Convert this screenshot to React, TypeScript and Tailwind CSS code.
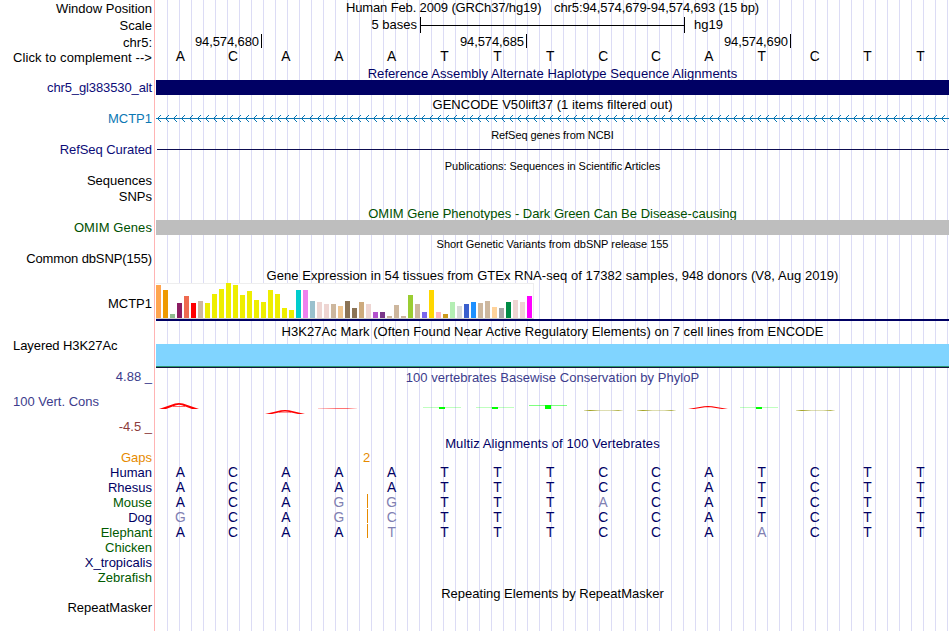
import type { ReactNode } from "react";
import clsx from "clsx";

type Bar = { height: number; color: string };

type Species = {
  name: string;
  color: string;
  bases?: string;
  mismatches?: number[];
  insertion?: boolean;
};

const REFERENCE = "ACAAATTTCCATCTT";

const species: Species[] = [
  { name: "Human", color: "text-[#000064]", bases: REFERENCE },
  { name: "Rhesus", color: "text-[#000064]", bases: REFERENCE },
  { name: "Mouse", color: "text-[#005a00]", bases: "ACAGGTTTACATCTT", mismatches: [3, 4, 8], insertion: true },
  { name: "Dog", color: "text-[#000064]", bases: "GCAGCTTTCCATCTT", mismatches: [0, 3, 4], insertion: true },
  { name: "Elephant", color: "text-[#005a00]", bases: "ACAATTTTCCAACTT", mismatches: [4, 11], insertion: true },
  { name: "Chicken", color: "text-[#005a00]" },
  { name: "X_tropicalis", color: "text-[#000064]" },
  { name: "Zebrafish", color: "text-[#005a00]" },
];

const tissues: Bar[] = [
  { height: 33, color: "#ffa54f" },
  { height: 28, color: "#ee9a00" },
  { height: 4, color: "#8fbc8f" },
  { height: 15, color: "#8b1c62" },
  { height: 22, color: "#ee6a50" },
  { height: 15, color: "#ff0000" },
  { height: 17, color: "#cdb79e" },
  { height: 15, color: "#eeee00" },
  { height: 24, color: "#eeee00" },
  { height: 29, color: "#eeee00" },
  { height: 35, color: "#eeee00" },
  { height: 33, color: "#eeee00" },
  { height: 23, color: "#eeee00" },
  { height: 27, color: "#eeee00" },
  { height: 18, color: "#eeee00" },
  { height: 16, color: "#eeee00" },
  { height: 28, color: "#eeee00" },
  { height: 24, color: "#eeee00" },
  { height: 10, color: "#eeee00" },
  { height: 8, color: "#eeee00" },
  { height: 28, color: "#00cdcd" },
  { height: 28, color: "#ee82ee" },
  { height: 17, color: "#9ac0cd" },
  { height: 16, color: "#eed5d2" },
  { height: 14, color: "#eed5d2" },
  { height: 14, color: "#cdb79e" },
  { height: 12, color: "#eec591" },
  { height: 17, color: "#8b7355" },
  { height: 10, color: "#8b7355" },
  { height: 16, color: "#cdaa7d" },
  { height: 14, color: "#eed5d2" },
  { height: 6, color: "#b452cd" },
  { height: 6, color: "#7a378b" },
  { height: 2, color: "#cdb79e" },
  { height: 13, color: "#cdb79e" },
  { height: 2, color: "#cdb79e" },
  { height: 23, color: "#9acd32" },
  { height: 14, color: "#cdb79e" },
  { height: 6, color: "#7a67ee" },
  { height: 28, color: "#ffd700" },
  { height: 6, color: "#ffb6c1" },
  { height: 4, color: "#cd9b1d" },
  { height: 16, color: "#b4eeb4" },
  { height: 12, color: "#d9d9d9" },
  { height: 14, color: "#3a5fcd" },
  { height: 16, color: "#1e90ff" },
  { height: 15, color: "#cdb79e" },
  { height: 17, color: "#cdb79e" },
  { height: 11, color: "#ffd39b" },
  { height: 10, color: "#a6a6a6" },
  { height: 16, color: "#008b45" },
  { height: 18, color: "#eed5d2" },
  { height: 16, color: "#eed5d2" },
  { height: 22, color: "#ff00ff" },
];

type RowProps = {
  label?: string;
  labelClass?: string;
  className?: string;
  children?: ReactNode;
};

const Row = ({ label, labelClass, className, children }: RowProps) => (
  <div className={clsx("flex shrink-0", className ?? "h-[15px]")}>
    <div className={clsx("w-[156px] shrink-0 whitespace-pre pr-1 text-right", labelClass)}>{label}</div>
    <div className="w-[793px] shrink-0">{children}</div>
  </div>
);

const Title = ({ text, className, height }: { text: string; className?: string; height?: string }) => (
  <Row className={height ?? "h-4 pt-0.5"}>
    <div className={clsx("whitespace-nowrap text-center", className)}>{text}</div>
  </Row>
);

const Bases = ({ bases, mismatches = [], className }: { bases: string; mismatches?: number[]; className?: string }) => (
  <div className={clsx("-ml-[2.2px] grid w-[793px] grid-cols-15 text-center text-[13.8px]", className)}>
    {bases.split("").map((base, i) => (
      <span key={i} className={clsx(mismatches.includes(i) && "text-[#8080b2]")}>
        {base}
      </span>
    ))}
  </div>
);

const ScaleBar = () => (
  <div className="flex">
    <span className="w-[261px] text-right">5 bases</span>
    <div className="ml-[3px] flex h-4 w-[265px] items-center border-x border-black">
      <div className="h-px w-full bg-black" />
    </div>
    <span className="ml-[9px]">hg19</span>
  </div>
);

const Coordinates = () => (
  <div className="flex tracking-[-0.1px]">
    <span className="h-[14px] w-[106px] border-r border-black pr-0.5 text-right">94,574,680</span>
    <span className="h-[14px] w-[265px] border-r border-black pr-0.5 text-right">94,574,685</span>
    <span className="h-[14px] w-[264px] border-r border-black pr-0.5 text-right">94,574,690</span>
  </div>
);

const IntronArrows = () => (
  <svg className="block" width="793" height="15" shapeRendering="crispEdges">
    <rect x="0" y="7" width="793" height="1" fill="#0c78b4" />
    {Array.from({ length: 99 }, (_, i) => {
      const x = 1 + i * 8;
      return (
        <path
          key={i}
          d={`M${x + 1} 6h1v1h-1zM${x + 2} 5h1v1h-1zM${x + 3} 4h1v1h-1zM${x + 1} 8h1v1h-1zM${x + 2} 9h1v1h-1zM${x + 3} 10h1v1h-1z`}
          fill="#0c78b4"
        />
      );
    })}
  </svg>
);

const ExpressionGraph = () => (
  <div className="flex h-10 flex-col pt-px">
    <div className="flex h-9 w-[378px] items-end gap-0.5 border-b border-r border-t border-[#eeeeee] border-b-[#cccccc] bg-white">
      {tissues.map((tissue, i) => (
        <div key={i} className="w-[5px] shrink-0" style={{ height: tissue.height, backgroundColor: tissue.color }} />
      ))}
    </div>
    <div className="h-0.5 bg-[#000064]" />
  </div>
);

const greenMark = (x: number, y: number, height: number, opacity: number) => (
  <g key={x}>
    <rect x={x} y={y} width="38" height="1" fill="#00ff00" opacity={opacity} />
    <rect x={x + 16} y={y} width="6" height={height} fill="#00ff00" />
  </g>
);

const Conservation = () => (
  <svg className="block" width="793" height="18">
    <defs>
      <linearGradient id="olive">
        <stop offset="0" stopColor="#a0a020" stopOpacity="0.3" />
        <stop offset="0.15" stopColor="#a0a020" />
        <stop offset="0.4" stopColor="#a0a020" stopOpacity="0.35" />
        <stop offset="0.7" stopColor="#a0a020" stopOpacity="0.35" />
        <stop offset="0.88" stopColor="#a0a020" stopOpacity="0.8" />
        <stop offset="1" stopColor="#a0a020" stopOpacity="0.1" />
      </linearGradient>
      <linearGradient id="flat">
        <stop offset="0" stopColor="#ff0000" stopOpacity="0.2" />
        <stop offset="0.5" stopColor="#ff0000" stopOpacity="0.55" />
        <stop offset="0.75" stopColor="#ff0000" stopOpacity="0.55" />
        <stop offset="1" stopColor="#ff0000" stopOpacity="0.1" />
      </linearGradient>
    </defs>
    <path d="M3 9L19 3.4Q23 2.4 27 3.4L43 9H36L26 5.2Q23 4.2 20 5.2L10 9z" fill="#ff0000" />
    <rect x="17" y="6" width="12" height="1" fill="#ff0000" opacity="0.6" />
    <path d="M109 14L125 10.3Q129 9.5 133 10.3L149 14H142L132 11.7Q129 11.2 126 11.7L116 14z" fill="#ff0000" />
    <rect x="123" y="12" width="12" height="1" fill="#ff0000" opacity="0.4" />
    <rect x="162" y="8" width="39" height="1" fill="url(#flat)" />
    <path d="M532 9L548 6.3Q552 5.7 556 6.3L572 9H566L555 7.3Q552 7 549 7.3L538 9z" fill="#ff0000" />
    {greenMark(267, 7, 2, 0.25)}
    {greenMark(320, 7, 2, 0.25)}
    {greenMark(373, 5, 4, 0.5)}
    {greenMark(584, 7, 2, 0.25)}
    {[428, 481, 640].map((x) => (
      <rect key={x} x={x} y="10" width="39" height="1" fill="url(#olive)" />
    ))}
  </svg>
);

const App = () => {
  return (
    <div className="h-[631px] w-[950px] overflow-hidden bg-white font-['Liberation_Sans',Arial,sans-serif] text-[13px] leading-[15px] text-black">
      <div className="relative flex h-full w-[949px] flex-col">
        {/* guide lines behind every track */}
        <div className="absolute inset-y-0 left-[154px] right-0 flex">
          <div className="w-px bg-[#ffb4b4]" />
          <div className="ml-px flex-1 bg-[repeating-linear-gradient(90deg,transparent_0px,transparent_11px,#dcdcf5_11px,#dcdcf5_12px)]" />
        </div>

        <div className="relative flex flex-col">
          <Row label="Window Position" className="h-[17px] pt-px">
            <div className="-mt-px flex pl-[190px]">
              <span className="w-[208px] whitespace-nowrap tracking-[-0.14px]">Human Feb. 2009 (GRCh37/hg19)</span>
              <span className="whitespace-nowrap tracking-[-0.09px]">chr5:94,574,679-94,574,693 (15 bp)</span>
            </div>
          </Row>
          <Row label="Scale" className="h-[17px]" labelClass="pt-px">
            <ScaleBar />
          </Row>
          <Row label="chr5:" className="h-4" labelClass="pt-px">
            <Coordinates />
          </Row>
          <Row label="Click to complement -->" labelClass="tracking-[0.09px]">
            <Bases bases={REFERENCE} className="-mt-px" />
          </Row>

          <Title
            text="Reference Assembly Alternate Haplotype Sequence Alignments"
            className="tracking-[0.07px] text-[#000064]"
            height="h-[15px] pt-px"
          />
          <Row label="chr5_gl383530_alt" labelClass="tracking-[-0.12px] text-[#0c0c78]">
            <div className="h-[15px] bg-[#000064]" />
          </Row>

          <Title text="GENCODE V50lift37 (1 items filtered out)" className="tracking-[0.04px]" />
          <Row label="MCTP1" labelClass="text-[#0c78b4]">
            <IntronArrows />
          </Row>

          <Title text="RefSeq genes from NCBI" className="text-[11px] tracking-[-0.07px]" />
          <Row label="RefSeq Curated" labelClass="tracking-[-0.07px] text-[#0c0c78]">
            <div className="ml-px pt-[7px]">
              <div className="h-px bg-[#0c0c50]" />
            </div>
          </Row>

          <Title text="Publications: Sequences in Scientific Articles" className="text-[11px] tracking-[-0.05px]" />
          <Row label="Sequences" className="h-4" />
          <Row label="SNPs" />

          <Title text="OMIM Gene Phenotypes - Dark Green Can Be Disease-causing" className="text-[#005000]" />
          <Row label="OMIM Genes" labelClass="tracking-[0.08px] text-[#005000]">
            <div className="h-[15px] bg-[#bebebe]" />
          </Row>

          <Title text="Short Genetic Variants from dbSNP release 155" className="text-[11px] tracking-[-0.03px]" />
          <Row label="Common dbSNP(155)" labelClass="tracking-[-0.12px]" />

          <Title
            text="Gene Expression in 54 tissues from GTEx RNA-seq of 17382 samples, 948 donors (V8, Aug 2019)"
            className="tracking-[0.05px]"
          />
          <Row label="MCTP1" className="h-10" labelClass="pt-[14px]">
            <ExpressionGraph />
          </Row>

          <Title
            text="H3K27Ac Mark (Often Found Near Active Regulatory Elements) on 7 cell lines from ENCODE"
            className="tracking-[0.05px]"
          />
          <Row label="Layered H3K27Ac" className="h-[30px]" labelClass="pl-[13px] text-left! tracking-[-0.07px]">
            <div className="pt-1.5">
              <div className="h-6 border-b border-[#14143c] bg-[#80d4ff]">
                <div className="h-[22px]" />
                <div className="h-px bg-[#28966e]" />
              </div>
            </div>
          </Row>

          <div className="flex h-[66px]">
            <div className="flex w-[156px] flex-col pl-[13px] pr-1 pt-px text-right text-[#3c3c8c]">
              <span>4.88 _</span>
              <span className="mt-2.5 text-left">100 Vert. Cons</span>
              <span className="mt-2.5 text-[#8c3c3c]">-4.5 _</span>
            </div>
            <div className="w-[793px] pt-0.5">
              <div className="h-[30px] text-center tracking-[0.03px] text-[#3c3c8c]">
                100 vertebrates Basewise Conservation by PhyloP
              </div>
              <Conservation />
            </div>
          </div>

          <Title text="Multiz Alignments of 100 Vertebrates" className="tracking-[0.1px] text-[#000064]" />
          <Row label="Gaps" labelClass="text-[#e68a00]">
            <div className="pl-[207px] text-[#e68a00]">2</div>
          </Row>
          {species.map((s) => (
            <Row key={s.name} label={s.name} labelClass={s.color}>
              {s.bases && (
                <div className="relative text-[#000064]">
                  <Bases bases={s.bases} mismatches={s.mismatches} />
                  {s.insertion && <div className="absolute -top-px left-[211px] h-[14px] w-px bg-[#e68a00]" />}
                </div>
              )}
            </Row>
          ))}

          <Title text="Repeating Elements by RepeatMasker" height="h-[15px] pt-px" />
          <Row label="RepeatMasker" />
        </div>
      </div>
    </div>
  );
};

export default App;
